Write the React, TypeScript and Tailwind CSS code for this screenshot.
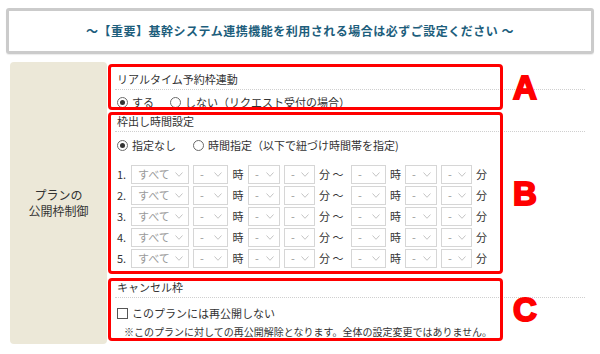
import React from "react";

const jp = "font-['Noto_Sans_CJK_JP','Noto_Sans',sans-serif]";

function Chevron() {
  return (
    <svg className="w-[8px] h-[5px] shrink-0" viewBox="0 0 8 5" fill="none" stroke="#c4c4c4" strokeWidth={1}>
      <polyline points="0.5,0.5 4,4.3 7.5,0.5" />
    </svg>
  );
}

function FakeSelect({ w, label }: { w: string; label: string }) {
  return (
    <div className={`${w} h-[19px] border border-[#d6d6d6] bg-white flex items-center justify-between pl-[6px] pr-[5px] text-[#9a9a9a]`}>
      <span className="leading-none">{label}</span>
      <Chevron />
    </div>
  );
}

function Radio({ checked }: { checked?: boolean }) {
  return (
    <span className="w-[11px] h-[11px] rounded-full border border-[#6b6b6b] bg-white flex items-center justify-center shrink-0">
      {checked && <span className="w-[5px] h-[5px] rounded-full bg-[#333]" />}
    </span>
  );
}

function TimeRow({ n }: { n: number }) {
  return (
    <div className="flex items-center h-[19px]">
      <span className="w-[14px] text-[#333]">{n}.</span>
      <FakeSelect w="w-[58px]" label="すべて" />
      <div className="ml-[4px]"><FakeSelect w="w-[35px]" label="-" /></div>
      <span className="w-[20px] text-center">時</span>
      <FakeSelect w="w-[32px]" label="-" />
      <div className="ml-[4px]"><FakeSelect w="w-[31px]" label="-" /></div>
      <span className="w-[36px] pl-[4px] whitespace-nowrap">分 ～</span>
      <FakeSelect w="w-[35px]" label="-" />
      <span className="w-[19px] text-center">時</span>
      <FakeSelect w="w-[32px]" label="-" />
      <div className="ml-[4px]"><FakeSelect w="w-[31px]" label="-" /></div>
      <span className="pl-[4px]">分</span>
    </div>
  );
}

function Mark({ top, h, letter }: { top: string; h: string; letter: string }) {
  return (
    <>
      <div className={`absolute left-0 ${top} ${h} w-[395px] border-[3px] border-[#f00] rounded-[4px] pointer-events-none`} />
      <div className={`absolute left-[405px] ${top} ${h} flex items-center`}>
        <span className="font-['Liberation_Sans',Arial,sans-serif] font-bold text-[33px] leading-none text-[#f00] [-webkit-text-stroke:2px_#f00]">
          {letter}
        </span>
      </div>
    </>
  );
}

export default function App() {
  return (
    <div className={`w-[600px] h-[354px] bg-white overflow-hidden ${jp} text-[11px] text-[#333]`}>
      <div className="pt-[8px] px-[6px]">
        <div className="h-[46px] border-[3px] border-[#cbcbcb] rounded-[3px] flex items-center justify-center shadow-[0_1px_1px_rgba(0,0,0,0.08)]">
          <span className="text-[12px] font-bold text-[#1d5e7c] tracking-[0.5px]">
            ～【重要】基幹システム連携機能を利用される場合は必ずご設定ください ～
          </span>
        </div>
      </div>

      <div className="flex mt-[8px] ml-[10px]">
        <div className="w-[97px] h-[282px] bg-[#ece8d8] rounded-[4px] flex flex-col items-center justify-center text-[12px] leading-[16px] text-[#333]">
          <span>プランの</span>
          <span>公開枠制御</span>
        </div>

        <div className="relative ml-[1px] w-[477px] pl-[7px] pt-[7px]">
          {/* A */}
          <div className="h-[21px] flex items-center pl-[2px] border-b border-dotted border-[#cfcfcf]">リアルタイム予約枠連動</div>
          <div className="mt-[5px] h-[14px] flex items-center pl-[2px]">
            <Radio checked />
            <span className="ml-[4px]">する</span>
            <span className="ml-[16px]"><Radio /></span>
            <span className="ml-[4px]">しない（リクエスト受付の場合）</span>
          </div>

          {/* B */}
          <div className="mt-[2px] h-[21px] flex items-center pl-[2px] border-b border-dotted border-[#cfcfcf]">枠出し時間設定</div>
          <div className="mt-[5px] h-[16px] flex items-center pl-[2px]">
            <Radio checked />
            <span className="ml-[4px]">指定なし</span>
            <span className="ml-[17px]"><Radio /></span>
            <span className="ml-[4px]">時間指定（以下で紐づけ時間帯を指定)</span>
          </div>
          <div className="mt-[12px] flex flex-col gap-[2px] pl-[2px]">
            {[1, 2, 3, 4, 5].map((n) => (
              <TimeRow key={n} n={n} />
            ))}
          </div>

          {/* C */}
          <div className="mt-[9px] h-[21px] flex items-center pl-[2px] border-b border-dotted border-[#cfcfcf]">キャンセル枠</div>
          <div className="mt-[7px] h-[16px] flex items-center pl-[2px]">
            <span className="w-[11px] h-[11px] border border-[#555] bg-white shrink-0" />
            <span className="ml-[4px]">このプランには再公開しない</span>
          </div>
          <div className="mt-[3px] h-[14px] flex items-center pl-[9px] text-[10px]">
            ※このプランに対しての再公開解除となります。全体の設定変更ではありません。
          </div>

          <Mark top="top-[2px]" h="h-[46px]" letter="A" />
          <Mark top="top-[50px]" h="h-[162px]" letter="B" />
          <Mark top="top-[216px]" h="h-[63px]" letter="C" />
        </div>
      </div>
    </div>
  );
}
